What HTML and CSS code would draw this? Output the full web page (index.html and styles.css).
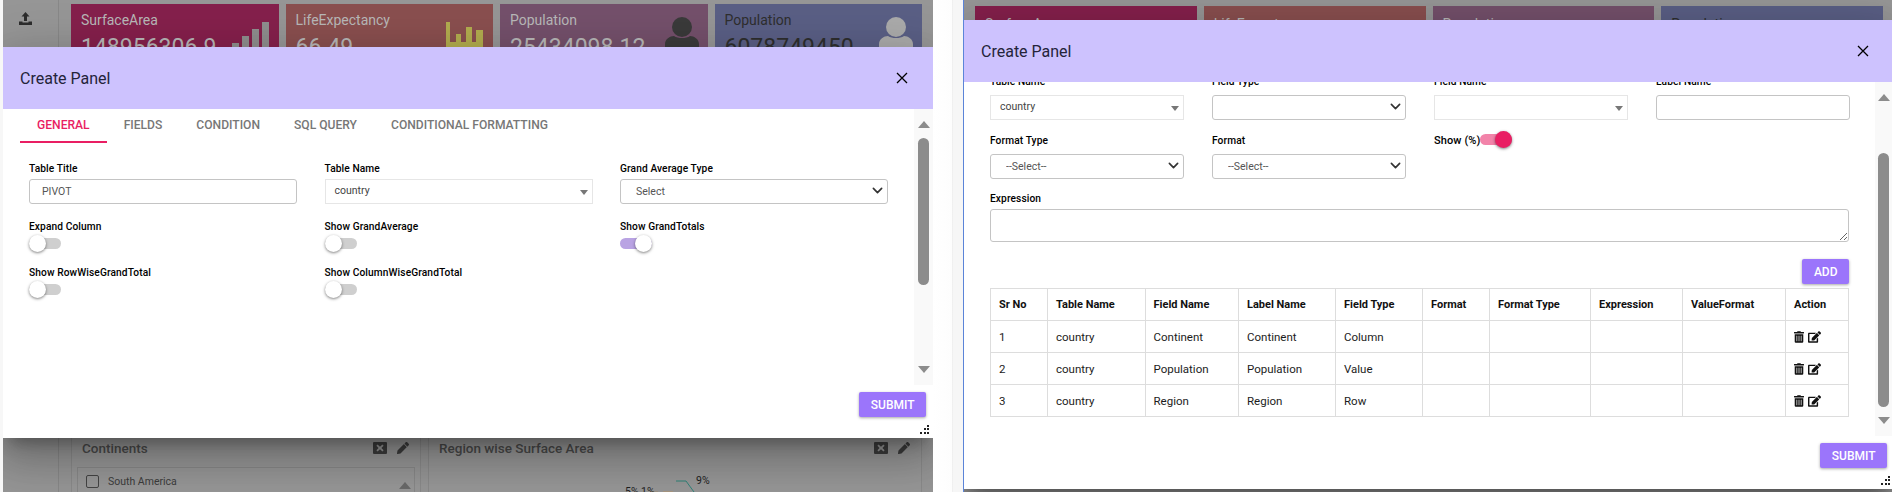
FILE: index.html
```html
<!DOCTYPE html>
<html lang="en">
<head>
    <meta charset="UTF-8">
    <meta name="viewport" content="width=device-width, initial-scale=1.0">
    <title>Create Panel</title>
    <link rel="stylesheet" href="styles.css">
</head>
<body>
    <svg class="icon-defs" aria-hidden="true">
        <symbol id="i-trash" viewBox="0 0 448 512"><path d="M32 464a48 48 0 0 0 48 48h288a48 48 0 0 0 48-48V128H32zm272-256a16 16 0 0 1 32 0v224a16 16 0 0 1-32 0zm-96 0a16 16 0 0 1 32 0v224a16 16 0 0 1-32 0zm-96 0a16 16 0 0 1 32 0v224a16 16 0 0 1-32 0zM432 32H312l-9.4-18.7A24 24 0 0 0 281.1 0H166.8a23.72 23.72 0 0 0-21.4 13.3L136 32H16A16 16 0 0 0 0 48v32a16 16 0 0 0 16 16h416a16 16 0 0 0 16-16V48a16 16 0 0 0-16-16z"/></symbol>
        <symbol id="i-edit" viewBox="0 0 576 512"><path d="M402.6 83.2l90.2 90.2c3.8 3.8 3.8 10 0 13.8L274.4 405.6l-92.8 10.3c-12.4 1.4-22.9-9.1-21.5-21.5l10.3-92.8L388.8 83.2c3.8-3.8 10-3.8 13.8 0zm162-22.9l-48.8-48.8c-15.2-15.2-39.9-15.2-55.2 0l-35.4 35.4c-3.8 3.8-3.8 10 0 13.8l90.2 90.2c3.8 3.8 10 3.8 13.8 0l35.4-35.4c15.2-15.3 15.2-40 0-55.2zM384 346.2V448H64V128h229.8c3.2 0 6.2-1.3 8.5-3.5l40-40c7.6-7.6 2.2-20.5-8.5-20.5H48C21.5 64 0 85.5 0 112v352c0 26.5 21.5 48 48 48h352c26.5 0 48-21.5 48-48V306.2c0-10.7-12.9-16-20.5-8.5l-40 40c-2.2 2.3-3.5 5.3-3.5 8.5z"/></symbol>
        <symbol id="i-pencil" viewBox="0 0 512 512"><path d="M497.9 142.1l-46.1 46.1c-4.7 4.7-12.3 4.7-17 0l-111-111c-4.7-4.7-4.7-12.3 0-17l46.1-46.1c18.7-18.7 49.1-18.7 67.9 0l60.1 60.1c18.8 18.7 18.8 49.1 0 67.9zM284.2 99.8L21.6 362.4.4 483.9c-2.9 16.4 11.4 30.6 27.8 27.8l121.5-21.3 262.6-262.6c4.7-4.7 4.7-12.3 0-17l-111-111c-4.8-4.7-12.4-4.7-17.1 0z"/></symbol>
        <symbol id="i-close-box" viewBox="0 0 14 12"><path fill-rule="evenodd" d="M1 0h12a1 1 0 0 1 1 1v10a1 1 0 0 1-1 1H1a1 1 0 0 1-1-1V1a1 1 0 0 1 1-1zm3.6 2.6L3.4 3.8 5.6 6 3.4 8.2l1.2 1.2L7 7.2l2.4 2.2 1.2-1.2L8.4 6l2.2-2.2-1.2-1.2L7 4.800z"/></symbol>
        <symbol id="i-person" viewBox="0 0 34 40"><circle cx="17" cy="10" r="10"/><path d="M0 40v-13c0-5 5-8 9-8 2 1.500 5 2 8 2s6-.5 8-2c4 0 9 3 9 8v13z"/></symbol>
        <symbol id="i-times" viewBox="0 0 12 12"><path d="M1 1l10 10M11 1L1 11" fill="none" stroke="currentColor" stroke-width="1.300"/></symbol>
        <symbol id="i-chevron" viewBox="0 0 16 16"><path d="M2 5l6 6 6-6" fill="none" stroke="currentColor" stroke-width="2.400" stroke-linecap="round" stroke-linejoin="round"/></symbol>
        <symbol id="i-grip" viewBox="0 0 9 9"><path d="M7 0h2v2H7zM4 3h2v2H4zM7 3h2v2H7zM0 7h2v2H0zM4 7h2v2H4zM7 7h2v2H7z"/></symbol>
    </svg>

    <div class="screens">
        <!-- first screenshot: general tab -->
        <div class="desk desk-left">
            <div class="side">
                <svg class="upload" viewBox="0 0 13 13"><path d="M6.500 0l4 4.500H8V9H5V4.500H2.500zM0 9.500h3.500v1h6v-1H13V13H0z"/></svg>
            </div>
            <div class="board">
                <div class="tiles">
                    <div class="tile tile-pink">
                        <div class="tile-title">SurfaceArea</div>
                        <div class="tile-value">148956306.9</div>
                        <div class="tile-bars"><i class="b1"></i><i class="b2"></i><i class="b3"></i><i class="b4"></i><i class="b5"></i></div>
                    </div>
                    <div class="tile tile-red">
                        <div class="tile-title">LifeExpectancy</div>
                        <div class="tile-value">66.49</div>
                        <svg class="tile-chart" viewBox="0 0 37 26"><path d="M0 0h4v20h33v6H0zM10 12h5v8h-5zM20 5h6v15h-6zM30 8h7v12h-7z"/></svg>
                    </div>
                    <div class="tile tile-plum">
                        <div class="tile-title">Population</div>
                        <div class="tile-value">25434098.12</div>
                        <svg class="tile-person"><use href="#i-person"/></svg>
                    </div>
                    <div class="tile tile-blue">
                        <div class="tile-title">Population</div>
                        <div class="tile-value">6078749450</div>
                        <svg class="tile-person"><use href="#i-person"/></svg>
                    </div>
                </div>
                <div class="panels">
                    <div class="panel panel-small">
                        <div class="panel-head">
                            <span>Continents</span>
                            <svg class="panel-icon"><use href="#i-close-box"/></svg>
                            <svg class="panel-icon"><use href="#i-pencil"/></svg>
                        </div>
                        <div class="check-list">
                            <span class="check-box"></span>
                            <span>South America</span>
                            <span class="list-up"></span>
                        </div>
                    </div>
                    <div class="panel panel-big">
                        <div class="panel-head">
                            <span>Region wise Surface Area</span>
                            <svg class="panel-icon"><use href="#i-close-box"/></svg>
                            <svg class="panel-icon"><use href="#i-pencil"/></svg>
                        </div>
                        <svg class="pie" viewBox="0 0 492 30">
                            <path d="M247 14h10l8 11" fill="none" stroke="#2f8378"/>
                            <rect x="221" y="24" width="8" height="6" fill="#9b9184"/>
                            <rect x="234" y="24" width="10" height="6" fill="#a79680"/>
                            <text x="267" y="17">9%</text>
                            <text x="196" y="28">5%</text>
                            <text x="212" y="28">1%</text>
                        </svg>
                    </div>
                </div>
            </div>

            <div class="modal modal-left">
                <div class="modal-head">
                    <h2>Create Panel</h2>
                    <svg class="modal-close"><use href="#i-times"/></svg>
                </div>
                <div class="modal-body">
                    <div class="modal-scroll">
                        <div class="tabs">
                            <span class="tab tab-on">GENERAL</span>
                            <span class="tab">FIELDS</span>
                            <span class="tab">CONDITION</span>
                            <span class="tab">SQL QUERY</span>
                            <span class="tab">CONDITIONAL FORMATTING</span>
                        </div>
                        <div class="general-grid">
                            <div class="field">
                                <label>Table Title</label>
                                <input class="input" type="text" value="PIVOT">
                            </div>
                            <div class="field">
                                <label>Table Name</label>
                                <div class="combo">country<span class="combo-arrow"></span></div>
                            </div>
                            <div class="field">
                                <label>Grand Average Type</label>
                                <div class="select">
                                    <select class="input input-select"><option>Select</option></select>
                                    <svg class="select-arrow"><use href="#i-chevron"/></svg>
                                </div>
                            </div>
                            <div class="field field-toggle">
                                <label>Expand Column</label>
                                <span class="toggle"></span>
                            </div>
                            <div class="field field-toggle">
                                <label>Show GrandAverage</label>
                                <span class="toggle"></span>
                            </div>
                            <div class="field field-toggle">
                                <label>Show GrandTotals</label>
                                <span class="toggle toggle-lilac"></span>
                            </div>
                            <div class="field field-toggle">
                                <label>Show RowWiseGrandTotal</label>
                                <span class="toggle"></span>
                            </div>
                            <div class="field field-toggle">
                                <label>Show ColumnWiseGrandTotal</label>
                                <span class="toggle"></span>
                            </div>
                        </div>
                    </div>
                    <div class="scrollbar scrollbar-left">
                        <span class="arrow-up"></span>
                        <span class="thumb"></span>
                        <span class="arrow-down"></span>
                    </div>
                </div>
                <div class="modal-foot">
                    <button class="btn" type="button">SUBMIT</button>
                    <svg class="grip"><use href="#i-grip"/></svg>
                </div>
            </div>
        </div>

        <div class="gutter"></div>

        <!-- second screenshot: fields tab, scrolled -->
        <div class="desk desk-right">
            <div class="tiles">
                <div class="tile tile-pink"><div class="tile-title">SurfaceArea</div></div>
                <div class="tile tile-red"><div class="tile-title">LifeExpectancy</div></div>
                <div class="tile tile-plum"><div class="tile-title">Population</div></div>
                <div class="tile tile-blue"><div class="tile-title">Population</div></div>
            </div>

            <div class="modal modal-right">
                <div class="modal-head">
                    <h2>Create Panel</h2>
                    <svg class="modal-close"><use href="#i-times"/></svg>
                </div>
                <div class="modal-body">
                    <div class="modal-scroll fields-scroll">
                        <div class="fields-grid">
                            <div class="field">
                                <label>Table Name</label>
                                <div class="combo">country<span class="combo-arrow"></span></div>
                            </div>
                            <div class="field">
                                <label>Field Type</label>
                                <div class="select">
                                    <select class="input input-select"><option></option></select>
                                    <svg class="select-arrow"><use href="#i-chevron"/></svg>
                                </div>
                            </div>
                            <div class="field">
                                <label>Field Name</label>
                                <div class="combo"><span class="combo-arrow"></span></div>
                            </div>
                            <div class="field">
                                <label>Label Name</label>
                                <input class="input" type="text">
                            </div>
                            <div class="field">
                                <label>Format Type</label>
                                <div class="select">
                                    <select class="input input-select"><option>--Select--</option></select>
                                    <svg class="select-arrow"><use href="#i-chevron"/></svg>
                                </div>
                            </div>
                            <div class="field">
                                <label>Format</label>
                                <div class="select">
                                    <select class="input input-select"><option>--Select--</option></select>
                                    <svg class="select-arrow"><use href="#i-chevron"/></svg>
                                </div>
                            </div>
                            <div class="field field-inline">
                                <label>Show (%)</label>
                                <span class="toggle toggle-pink"></span>
                            </div>
                        </div>
                        <div class="field field-wide">
                            <label>Expression</label>
                            <textarea class="input text-box"></textarea>
                        </div>
                        <div class="add-row">
                            <button class="btn" type="button">ADD</button>
                        </div>
                        <table class="grid-table">
                            <thead>
                                <tr>
                                    <th>Sr No</th>
                                    <th>Table Name</th>
                                    <th>Field Name</th>
                                    <th>Label Name</th>
                                    <th>Field Type</th>
                                    <th>Format</th>
                                    <th>Format Type</th>
                                    <th>Expression</th>
                                    <th>ValueFormat</th>
                                    <th>Action</th>
                                </tr>
                            </thead>
                            <tbody>
                                <tr>
                                    <td>1</td><td>country</td><td>Continent</td><td>Continent</td><td>Column</td>
                                    <td></td><td></td><td></td><td></td>
                                    <td><svg class="act act-trash"><use href="#i-trash"/></svg><svg class="act act-edit"><use href="#i-edit"/></svg></td>
                                </tr>
                                <tr>
                                    <td>2</td><td>country</td><td>Population</td><td>Population</td><td>Value</td>
                                    <td></td><td></td><td></td><td></td>
                                    <td><svg class="act act-trash"><use href="#i-trash"/></svg><svg class="act act-edit"><use href="#i-edit"/></svg></td>
                                </tr>
                                <tr>
                                    <td>3</td><td>country</td><td>Region</td><td>Region</td><td>Row</td>
                                    <td></td><td></td><td></td><td></td>
                                    <td><svg class="act act-trash"><use href="#i-trash"/></svg><svg class="act act-edit"><use href="#i-edit"/></svg></td>
                                </tr>
                            </tbody>
                        </table>
                    </div>
                    <div class="scrollbar scrollbar-right">
                        <span class="arrow-up"></span>
                        <span class="thumb"></span>
                        <span class="arrow-down"></span>
                    </div>
                </div>
                <div class="modal-foot">
                    <button class="btn" type="button">SUBMIT</button>
                    <svg class="grip"><use href="#i-grip"/></svg>
                </div>
            </div>
        </div>
    </div>
</body>
</html>
```

FILE: styles.css
```css
* {
    box-sizing: border-box;
}

html, body {
    margin: 0;
    padding: 0;
    height: 492px;
    overflow: hidden;
}

body {
    font-family: Roboto, "Liberation Sans", sans-serif;
    background-color: #fff;
    color: #212121;
}

.icon-defs {
    display: none;
}

.screens {
    display: flex;
    height: 492px;
    padding-left: 3px;
    background-color: #f7f7f7;
}

/* dimmed dashboard behind each modal */
.desk {
    position: relative;
    height: 492px;
    overflow: hidden;
    background-color: #969696;
}

.desk-left {
    display: flex;
    width: 930px;
    flex: none;
}

.desk-right {
    flex: 1;
    min-width: 0;
    padding: 6px 9px 0 11px;
    border-left: 1px solid #5b84d8;
}

.gutter {
    width: 30px;
    flex: none;
    background: linear-gradient(to right, #fff 0, #fdfdfd 19px, #e9e9e9 19px, #f6f6f6 20px);
}

.side {
    width: 56px;
    flex: none;
    padding: 12px 0 0 16px;
    border-right: 1px solid #888;
}

.upload {
    display: block;
    width: 13px;
    height: 13px;
    fill: #2c2c2c;
}

.board {
    flex: 1;
    min-width: 0;
    padding: 4px 11px 0 12px;
}

.tiles {
    display: grid;
    grid-template-columns: repeat(4, 1fr);
    gap: 7px;
    height: 60px;
}

.tile {
    position: relative;
    padding: 6px 10px;
    color: #b8b8b8;
    overflow: hidden;
}

.desk-right .tile {
    padding-top: 8px;
}

.tile-pink { background-color: #85204c; }
.tile-red { background-color: #8a4f4f; }
.tile-plum { background-color: #74506b; }
.tile-blue { background-color: #5a5f85; color: #2e2e2e; }

.tile-title {
    font-size: 14px;
    line-height: 20px;
}

.tile-value {
    margin-top: 3px;
    font-size: 23px;
    line-height: 30px;
}

.tile-bars {
    position: absolute;
    right: 10px;
    top: 14px;
    bottom: 0;
    display: flex;
    gap: 3px;
    align-items: flex-end;
}

.tile-bars i {
    display: block;
    width: 7px;
    background-color: #8f8f8f;
}

.tile-bars .b1 { height: 14px; }
.tile-bars .b2 { height: 21px; }
.tile-bars .b3 { height: 28px; }
.tile-bars .b4 { height: 35px; }
.tile-bars .b5 { height: 42px; }

.tile-chart {
    position: absolute;
    right: 10px;
    top: 18px;
    width: 37px;
    height: 26px;
    fill: #b3ad4f;
}

.tile-person {
    position: absolute;
    right: 9px;
    top: 13px;
    width: 34px;
    height: 40px;
    fill: #3a3a3a;
}

.tile-blue .tile-person {
    fill: #ababab;
}

.panels {
    display: flex;
    gap: 7px;
    margin-top: 364px;
}

.panel {
    height: 70px;
    padding: 0 5px;
    border: 1px solid #8a8a8a;
    background-color: #979797;
}

.panel-small { width: 350px; }

.panel-big {
    flex: 1;
    min-width: 0;
    padding: 0;
}

.panel-head {
    display: flex;
    align-items: center;
    gap: 9px;
    height: 38px;
    padding: 0 5px;
    font-size: 13.500px;
    font-weight: 500;
    color: #4a4a4a;
}

.panel-big .panel-head {
    padding: 0 10px;
}

.panel-head span {
    flex: 1;
}

.panel-icon {
    width: 14px;
    height: 12px;
    fill: #3d3d3d;
}

.check-list {
    display: flex;
    align-items: center;
    gap: 9px;
    height: 40px;
    padding: 0 3px 12px 8px;
    border: 1px solid #888;
    font-size: 10.500px;
    color: #3c3c3c;
}

.check-list span:nth-child(2) {
    flex: 1;
}

.check-box {
    width: 13px;
    height: 13px;
    border: 1px solid #444;
    border-radius: 2px;
}

.list-up {
    width: 0;
    height: 0;
    margin-top: 8px;
    border: 6.500px solid transparent;
    border-top: 0;
    border-bottom: 7px solid #6a6a6a;
}

.pie {
    display: block;
    width: 492px;
    height: 30px;
    font-size: 10.500px;
    fill: #1e1e1e;
}

/* modal */
.modal {
    position: absolute;
    left: 0;
    right: 0;
    display: flex;
    flex-direction: column;
    background-color: #fff;
    box-shadow: 0 11px 15px -7px rgba(0, 0, 0, 0.3), 0 24px 38px 3px rgba(0, 0, 0, 0.16), 0 9px 46px 8px rgba(0, 0, 0, 0.14);
}

.modal-left {
    top: 47px;
    height: 391px;
}

.modal-right {
    top: 20px;
    bottom: 3px;
}

.modal-head {
    display: flex;
    align-items: center;
    justify-content: space-between;
    flex: none;
    height: 62px;
    padding: 0 25px 0 17px;
    background-color: #cdc2fe;
}

.modal-right .modal-head {
    padding-right: 23px;
}

.modal-head h2 {
    margin: 0;
    font-size: 16px;
    font-weight: 400;
    color: #24243a;
}

.modal-close {
    width: 12px;
    height: 12px;
    color: #000;
}

.modal-body {
    position: relative;
    display: flex;
    flex: 1;
    min-height: 0;
    overflow: hidden;
}

.modal-scroll {
    flex: 1;
    min-width: 0;
}

.scrollbar {
    display: flex;
    flex-direction: column;
    align-items: center;
    flex: none;
    background-color: #f9f9f9;
}

.scrollbar-left {
    width: 19px;
    height: 276px;
    padding: 12px 0 0;
}

.scrollbar-right {
    width: 17px;
    height: 354px;
    padding: 12px 0 0;
}

.arrow-up {
    width: 0;
    height: 0;
    border: 6.500px solid transparent;
    border-top: 0;
    border-bottom: 7px solid #8c8c8c;
}

.arrow-down {
    width: 0;
    height: 0;
    margin-top: 9px;
    border: 6.500px solid transparent;
    border-bottom: 0;
    border-top: 7px solid #8c8c8c;
}

.thumb {
    width: 11px;
    margin-top: 10px;
    border-radius: 6px;
    background-color: #8c8c8c;
}

.scrollbar-left .thumb {
    height: 147px;
    margin-bottom: 72px;
}

.scrollbar-right .thumb {
    height: 254px;
    margin-top: 52px;
    margin-bottom: 1px;
}

.modal-foot {
    position: relative;
    display: flex;
    justify-content: flex-end;
    flex: none;
    height: 53px;
    padding: 7px 7px 0 0;
}

.modal-right .modal-foot {
    padding-right: 5px;
}

.modal-left .grip {
    right: 4px;
}

.grip {
    position: absolute;
    right: 2px;
    bottom: 4px;
    width: 9px;
    height: 9px;
    fill: #222;
}

.btn {
    height: 25px;
    padding: 0 11.500px;
    border: 0;
    border-radius: 2px;
    background-color: #9b75fb;
    box-shadow: 0 1px 3px rgba(0, 0, 0, 0.35);
    color: #fff;
    font-family: inherit;
    font-size: 12px;
    font-weight: 500;
}

/* tabs */
.tabs {
    display: flex;
    height: 34px;
    margin-left: 17px;
}

.tab {
    height: 34px;
    padding: 9px 17px 0;
    color: #777;
    font-size: 12.100px;
    font-weight: 500;
    line-height: 15px;
    white-space: nowrap;
}

.tab-on {
    color: #e91e63;
    border-bottom: 2px solid #e91e63;
}

/* form */
.general-grid {
    display: grid;
    grid-template-columns: repeat(3, 268px);
    column-gap: 27.500px;
    padding: 18px 0 0 26px;
}

.fields-grid {
    display: grid;
    grid-template-columns: repeat(4, 194px);
    column-gap: 28px;
    padding-left: 26px;
}

.fields-scroll {
    margin-top: -8px;
}

.field {
    display: flex;
    flex-direction: column;
    height: 58px;
}

.fields-grid .field:nth-child(-n+4) {
    height: 59px;
}

.field label {
    height: 21px;
    color: #000;
    font-size: 10.200px;
    font-weight: 500;
    line-height: 16px;
    letter-spacing: 0.1px;
    white-space: nowrap;
}

.general-grid .field {
    height: 46px;
}

.general-grid .field:nth-child(-n+3) {
    height: 58px;
}

.general-grid .field:nth-child(-n+3) label {
    height: 18px;
}

.field-toggle label {
    height: 16px;
}

.input {
    width: 100%;
    height: 25px;
    padding: 0 12px;
    border: 1px solid #c4c4c4;
    border-radius: 3px;
    background-color: #fff;
    color: #555;
    font-family: inherit;
    font-size: 10.500px;
    outline: 0;
}

.input-select {
    appearance: none;
    padding-left: 15px;
}

.select {
    position: relative;
}

.select-arrow {
    position: absolute;
    right: 5px;
    top: 6px;
    width: 11px;
    height: 11px;
    color: #333;
    pointer-events: none;
}

.combo {
    position: relative;
    height: 25px;
    padding-left: 9px;
    border: 1px solid #e6e6e6;
    color: #444;
    font-size: 10.500px;
    line-height: 22px;
}

.combo-arrow {
    position: absolute;
    right: 4px;
    top: 10px;
    width: 0;
    height: 0;
    border: 4px solid transparent;
    border-bottom: 0;
    border-top: 5px solid #777;
}

.toggle {
    position: relative;
    display: block;
    width: 32px;
    height: 11px;
    margin-top: 3px;
    border-radius: 6px;
    background-color: #cfcfcf;
}

.toggle::after {
    content: "";
    position: absolute;
    left: 0;
    top: -3px;
    width: 17px;
    height: 17px;
    border-radius: 50%;
    background-color: #fff;
    box-shadow: 0 1px 3px rgba(0, 0, 0, 0.5);
}

.toggle-lilac {
    background-color: #b9a3e3;
}

.toggle-lilac::after {
    left: 15px;
}

.toggle-pink {
    margin: 1px 0 0;
    background-color: #f283a9;
}

.toggle-pink::after {
    left: 15px;
    background-color: #e91e63;
}

.field-inline {
    flex-direction: row;
}

.field-inline label {
    width: 46px;
    font-size: 11px;
}

.field-wide {
    height: 71px;
    margin: 0 0 0 26px;
    padding-right: 26px;
}

.field-wide label {
    height: 18px;
}

.text-box {
    display: block;
    height: 33px;
    resize: both;
}

.add-row {
    display: flex;
    justify-content: flex-end;
    padding-right: 26px;
    margin-top: -3px;
}

.grid-table {
    width: 859px;
    margin: 4px 0 0 26px;
    table-layout: fixed;
    border-collapse: collapse;
    font-size: 11.500px;
    color: #1c1c1c;
}

.grid-table th,
.grid-table td {
    height: 32px;
    padding: 0 8px;
    border: 1px solid #ddd;
    text-align: left;
    white-space: nowrap;
}

.grid-table th {
    font-size: 11px;
    font-weight: 700;
    color: #111;
}

.grid-table th:nth-child(1) { width: 57px; }
.grid-table th:nth-child(2) { width: 97.500px; }
.grid-table th:nth-child(3) { width: 93.500px; }
.grid-table th:nth-child(4) { width: 97px; }
.grid-table th:nth-child(5) { width: 87px; }
.grid-table th:nth-child(6) { width: 67px; }
.grid-table th:nth-child(7) { width: 101px; }
.grid-table th:nth-child(8) { width: 92px; }
.grid-table th:nth-child(9) { width: 103px; }

.act {
    display: inline-block;
    height: 12px;
    fill: #111;
    vertical-align: middle;
}

.act-trash {
    width: 10px;
    margin-right: 4px;
}

.act-edit {
    width: 13px;
}
```
